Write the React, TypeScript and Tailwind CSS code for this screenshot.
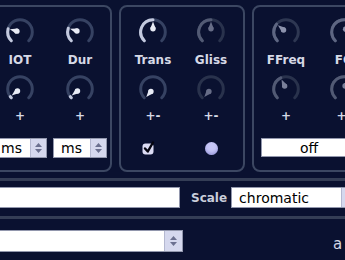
import React from "react";

function pt(cx: number, cy: number, r: number, a: number) {
  const rad = (a * Math.PI) / 180;
  return [cx + r * Math.sin(rad), cy - r * Math.cos(rad)];
}

function arc(cx: number, cy: number, r: number, a0: number, a1: number) {
  const [x0, y0] = pt(cx, cy, r, a0);
  const [x1, y1] = pt(cx, cy, r, a1);
  const large = a1 - a0 > 180 ? 1 : 0;
  return `M ${x0} ${y0} A ${r} ${r} 0 ${large} 1 ${x1} ${y1}`;
}

type KnobProps = {
  angle: number;
  ring?: string;
  lit?: string;
  pointer?: string;
};

function Knob({ angle, ring = "#364262", lit = "#c3c9de", pointer = "#e8ebf5" }: KnobProps) {
  const c = 16;
  const r = 12.3;
  const [tx, ty] = pt(c, c, 10.5, angle);
  const [bx, by] = pt(c, c, 3.2, angle);
  const [lx, ly] = pt(0, 0, 2.7, angle - 90);
  const [rx, ry] = pt(0, 0, 2.7, angle + 90);
  return (
    <svg width="32" height="32" viewBox="0 0 32 32">
      <path d={arc(c, c, r, -135, 135)} stroke={ring} strokeWidth="3" fill="none" strokeLinecap="round" />
      {angle > -130 && (
        <path d={arc(c, c, r, -135, angle)} stroke={lit} strokeWidth="3" fill="none" strokeLinecap="round" />
      )}
      <polygon points={`${tx},${ty} ${bx + lx},${by + ly} ${bx + rx},${by + ry}`} fill={pointer} />
      <circle cx={bx} cy={by} r="2.7" fill={pointer} />
    </svg>
  );
}

function Spinner({ w = 16 }: { w?: number }) {
  return (
    <div className="h-full flex flex-col items-center justify-center gap-[2px] bg-[#d5d8ee] border-l border-[#b4b8d0]" style={{ width: w }}>
      <svg width="7" height="4" viewBox="0 0 7 4"><polygon points="3.5,0 7,4 0,4" fill="#6b7090" /></svg>
      <svg width="7" height="4" viewBox="0 0 7 4"><polygon points="0,0 7,0 3.5,4" fill="#6b7090" /></svg>
    </div>
  );
}

function Select({ text, className }: { text: string; className: string }) {
  return (
    <div className={`flex items-stretch bg-white border border-[#9297ad] ${className}`}>
      <div className="flex-1 flex items-center pl-[7px] text-[14px] text-black leading-none">{text}</div>
      <Spinner />
    </div>
  );
}

type ColProps = {
  label: string;
  k1: KnobProps;
  k2: KnobProps;
  sign: string;
  bottom?: React.ReactNode;
  w?: string;
};

function Col({ label, k1, k2, sign, bottom, w = "w-[58px]" }: ColProps) {
  return (
    <div className={`${w} flex flex-col items-center pt-[9px]`}>
      <Knob {...k1} />
      <div className="mt-[5px] h-[14px] leading-[14px] text-[12px] font-bold text-[#d6d9e6] whitespace-nowrap">{label}</div>
      <div className="mt-[6px]"><Knob {...k2} /></div>
      <div className="mt-[4px] h-[14px] leading-[14px] text-[12px] font-bold text-[#d6d9e6]">{sign}</div>
      <div className="mt-[15px] h-[20px] w-full flex items-center justify-center">{bottom}</div>
    </div>
  );
}

function Checkbox() {
  return (
    <svg width="16" height="16" viewBox="0 0 16 16" className="-ml-[8px]">
      <rect x="1.5" y="3.5" width="11" height="11" rx="3" fill="#dcdcf4" />
      <path d="M4 8.5 L6.8 11.5 L12 2.5" stroke="#050510" strokeWidth="2.4" fill="none" strokeLinecap="round" strokeLinejoin="round" />
    </svg>
  );
}

function Radio() {
  return <div className="w-[13px] h-[13px] rounded-full bg-[#c6c6f6] shadow-[inset_0_-2px_3px_rgba(120,120,200,0.5)]" />;
}

const dimKnob = { ring: "#29324c", lit: "#525a74", pointer: "#676d87" };
const semiKnob = { ring: "#2e3752", lit: "#5e6682", pointer: "#8c92ac" };

export default function App() {
  return (
    <div className="w-[345px] h-[260px] overflow-hidden bg-[#0a1130] font-['DejaVu_Sans',sans-serif]">
      <div className="flex pt-[5px] ml-[-13px] gap-[7px] w-[420px]">
        {/* Panel 1 */}
        <div className="h-[167px] shrink-0 border-2 border-[#3c4762] rounded-[8px] flex pl-[4px] pr-[3px] gap-[6px]">
          <Col
            w="w-[54px]"
            label="IOT"
            k1={{ angle: -75 }}
            k2={{ angle: -128 }}
            sign="+"
            bottom={<Select text="ms" className="w-[54px] h-[20px]" />}
          />
          <Col
            w="w-[54px]"
            label="Dur"
            k1={{ angle: -72 }}
            k2={{ angle: -128 }}
            sign="+"
            bottom={<Select text="ms" className="w-[54px] h-[20px]" />}
          />
        </div>
        {/* Panel 2 */}
        <div className="h-[167px] shrink-0 border-2 border-[#3c4762] rounded-[8px] flex px-[3px]">
          <Col label="Trans" k1={{ angle: 0 }} k2={{ angle: -140 }} sign="+-" bottom={<Checkbox />} />
          <Col label="Gliss" k1={{ angle: 0, ...dimKnob }} k2={{ angle: -140, ...dimKnob }} sign="+-" bottom={<Radio />} />
        </div>
        {/* Panel 3 */}
        <div className="h-[167px] shrink-0 border-2 border-[#3c4762] rounded-[8px] flex flex-col px-[3px] w-[160px]">
          <div className="flex">
            <Col label="FFreq" k1={{ angle: -50, ...semiKnob }} k2={{ angle: -25, ...dimKnob, pointer: "#7a809a" }} sign="+" />
            <Col label="FQ" k1={{ angle: 30, ...semiKnob }} k2={{ angle: 20, ...dimKnob, pointer: "#7a809a" }} sign="+-" />
          </div>
          <div className="-mt-[20px] ml-[4px] w-[110px] h-[19px] bg-white border border-[#9297ad] flex items-center pl-[38px] text-[14px] text-black leading-none">
            off
          </div>
        </div>
      </div>

      <div className="mt-[6px] h-[3px] bg-[#343d55]" />

      <div className="mt-[6px] h-[21px] flex items-center">
        <div className="ml-[-10px] w-[190px] h-[21px] bg-white border border-[#9297ad] shrink-0" />
        <div className="ml-[11px] text-[12px] font-bold text-[#c9cdda] leading-none shrink-0">Scale</div>
        <Select text="chromatic" className="ml-[4px] w-[127px] h-[21px] shrink-0" />
      </div>

      <div className="mt-[8px] h-[3px] bg-[#343d55]" />

      <div className="mt-[11px] h-[22px] flex items-center">
        <div className="ml-[-10px] w-[193px] h-[22px] bg-white border border-[#9297ad] shrink-0 flex justify-end">
          <Spinner w={18} />
        </div>
        <div className="ml-[150px] text-[15px] text-[#d4d7e4] leading-none shrink-0 pt-[6px]">a</div>
      </div>
    </div>
  );
}
